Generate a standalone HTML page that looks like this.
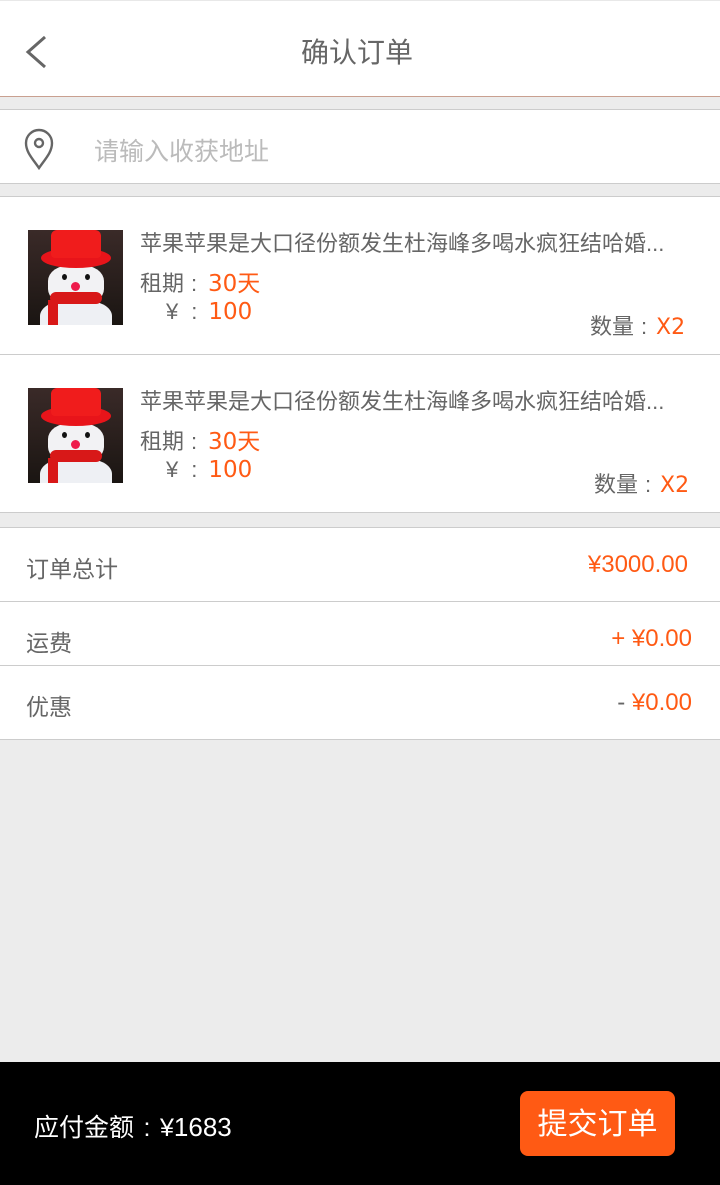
<!DOCTYPE html>
<html><head><meta charset="utf-8"><style>
*{margin:0;padding:0;box-sizing:border-box}
body{width:720px;height:1185px;background:#ececec;font-family:"Liberation Sans","Noto Sans CJK SC",sans-serif;position:relative;overflow:hidden;color:#666}
.abs{position:absolute}
.w{background:#fff;position:absolute;left:0;width:720px}
.or{color:#ff5a14}
.img{position:absolute;width:95px;height:95px;background:linear-gradient(#3a2a28,#1a1512);overflow:hidden}
.hat1{position:absolute;left:13px;top:18px;width:70px;height:20px;border-radius:50%;background:#e8141a}
.hat2{position:absolute;left:23px;top:0;width:50px;height:28px;border-radius:6px 6px 4px 4px;background:#f01c1c}
.face{position:absolute;left:20px;top:35px;width:56px;height:40px;border-radius:40%;background:#f2f2f4}
.body{position:absolute;left:12px;top:70px;width:72px;height:40px;border-radius:40% 40% 0 0;background:#eef0f4}
.scarf{position:absolute;left:22px;top:62px;width:52px;height:12px;border-radius:6px;background:#d81818}
.tail{position:absolute;left:20px;top:70px;width:10px;height:25px;background:#d81818}
.nose{position:absolute;left:43px;top:52px;width:9px;height:9px;border-radius:50%;background:#ee1c4c}
.eye{position:absolute;top:44px;width:5px;height:6px;border-radius:50%;background:#111}
.t{font-size:21px;position:absolute;white-space:nowrap}
.c{display:inline-block;width:20px;text-align:center}
.n{font-size:23px;font-family:"DejaVu Sans",sans-serif}
</style></head><body>
<div class="w" style="top:0;height:97px;border-top:1px solid #e8e8e8;border-bottom:1px solid #c9a090"></div>
<svg class="abs" style="left:24px;top:35px" width="26" height="34" viewBox="0 0 26 34"><path d="M21 2 L4 17 L21 32" fill="none" stroke="#666" stroke-width="3"/></svg>
<div class="t" style="left:0;width:714px;text-align:center;top:31px;font-size:28px;color:#666">确认订单</div>
<div class="w" style="top:109px;height:75px;border-top:1px solid #ccc;border-bottom:1px solid #ccc"></div>
<svg class="abs" style="left:24px;top:128px" width="32" height="42" viewBox="0 0 32 42"><path d="M15 40 C8 30 2 24 2 15 A13 13 0 0 1 28 15 C28 24 22 30 15 40Z" fill="none" stroke="#666" stroke-width="2.4"/><circle cx="15" cy="15" r="4" fill="none" stroke="#666" stroke-width="2.4"/></svg>
<div class="t" style="left:94px;top:132px;font-size:25px;color:#bbb">请输入收获地址</div>
<div class="w" style="top:196px;height:317px;border-top:1px solid #ccc;border-bottom:1px solid #ccc"></div>
<div class="abs" style="left:0;top:354px;width:720px;height:1px;background:#ccc"></div>

<div class="img" style="left:28px;top:230px"><div class="face"></div><div class="body"></div><div class="hat1"></div><div class="hat2"></div><div class="eye" style="left:34px"></div><div class="eye" style="left:57px"></div><div class="nose"></div><div class="scarf"></div><div class="tail"></div></div>
<div class="t" style="left:140px;top:226px;font-size:22px">苹果苹果是大口径份额发生杜海峰多喝水疯狂结哈婚...</div>
<div class="t" style="left:140px;top:264px;font-size:22px">租期<span class="c">:</span><span class="or n" style="margin-left:4px">30天</span></div>
<div class="t" style="left:166px;top:299px;font-size:22px">¥ <span class="c">:</span><span class="or n" style="margin-left:4px">100</span></div>
<div class="t" style="left:590px;top:309px;font-size:22px">数量<span class="c">:</span><span class="or n" style="font-size:22px;margin-left:2px">X2</span></div>

<div class="img" style="left:28px;top:388px"><div class="face"></div><div class="body"></div><div class="hat1"></div><div class="hat2"></div><div class="eye" style="left:34px"></div><div class="eye" style="left:57px"></div><div class="nose"></div><div class="scarf"></div><div class="tail"></div></div>
<div class="t" style="left:140px;top:384px;font-size:22px">苹果苹果是大口径份额发生杜海峰多喝水疯狂结哈婚...</div>
<div class="t" style="left:140px;top:422px;font-size:22px">租期<span class="c">:</span><span class="or n" style="margin-left:4px">30天</span></div>
<div class="t" style="left:166px;top:457px;font-size:22px">¥ <span class="c">:</span><span class="or n" style="margin-left:4px">100</span></div>
<div class="t" style="left:594px;top:467px;font-size:22px">数量<span class="c">:</span><span class="or n" style="font-size:22px;margin-left:2px">X2</span></div>

<div class="w" style="top:527px;height:213px;border-top:1px solid #ccc;border-bottom:1px solid #ccc"></div>
<div class="abs" style="left:0;top:601px;width:720px;height:1px;background:#ccc"></div>
<div class="abs" style="left:0;top:665px;width:720px;height:1px;background:#ccc"></div>
<div class="t" style="left:26px;top:550px;font-size:23px">订单总计</div>
<div class="t or" style="right:32px;top:551px;font-size:24px">¥3000.00</div>
<div class="t" style="left:26px;top:624px;font-size:23px">运费</div>
<div class="t or" style="right:28px;top:625px;font-size:24px">+ ¥0.00</div>
<div class="t" style="left:26px;top:688px;font-size:23px">优惠</div>
<div class="t or" style="right:28px;top:689px;font-size:24px"><span style="color:#666">-</span> ¥0.00</div>

<div class="abs" style="left:0;top:1062px;width:720px;height:123px;background:#000"></div>
<div class="t" style="left:34px;top:1108px;font-size:25px;color:#fff">应付金额<span style="display:inline-block;width:26px;text-align:center">:</span>¥<span style="font-size:26px">1683</span></div>
<div class="abs" style="left:520px;top:1091px;width:155px;height:65px;background:#ff5a14;border-radius:8px;color:#fff;font-size:30px;text-align:center;line-height:68px">提交订单</div>
</body></html>
